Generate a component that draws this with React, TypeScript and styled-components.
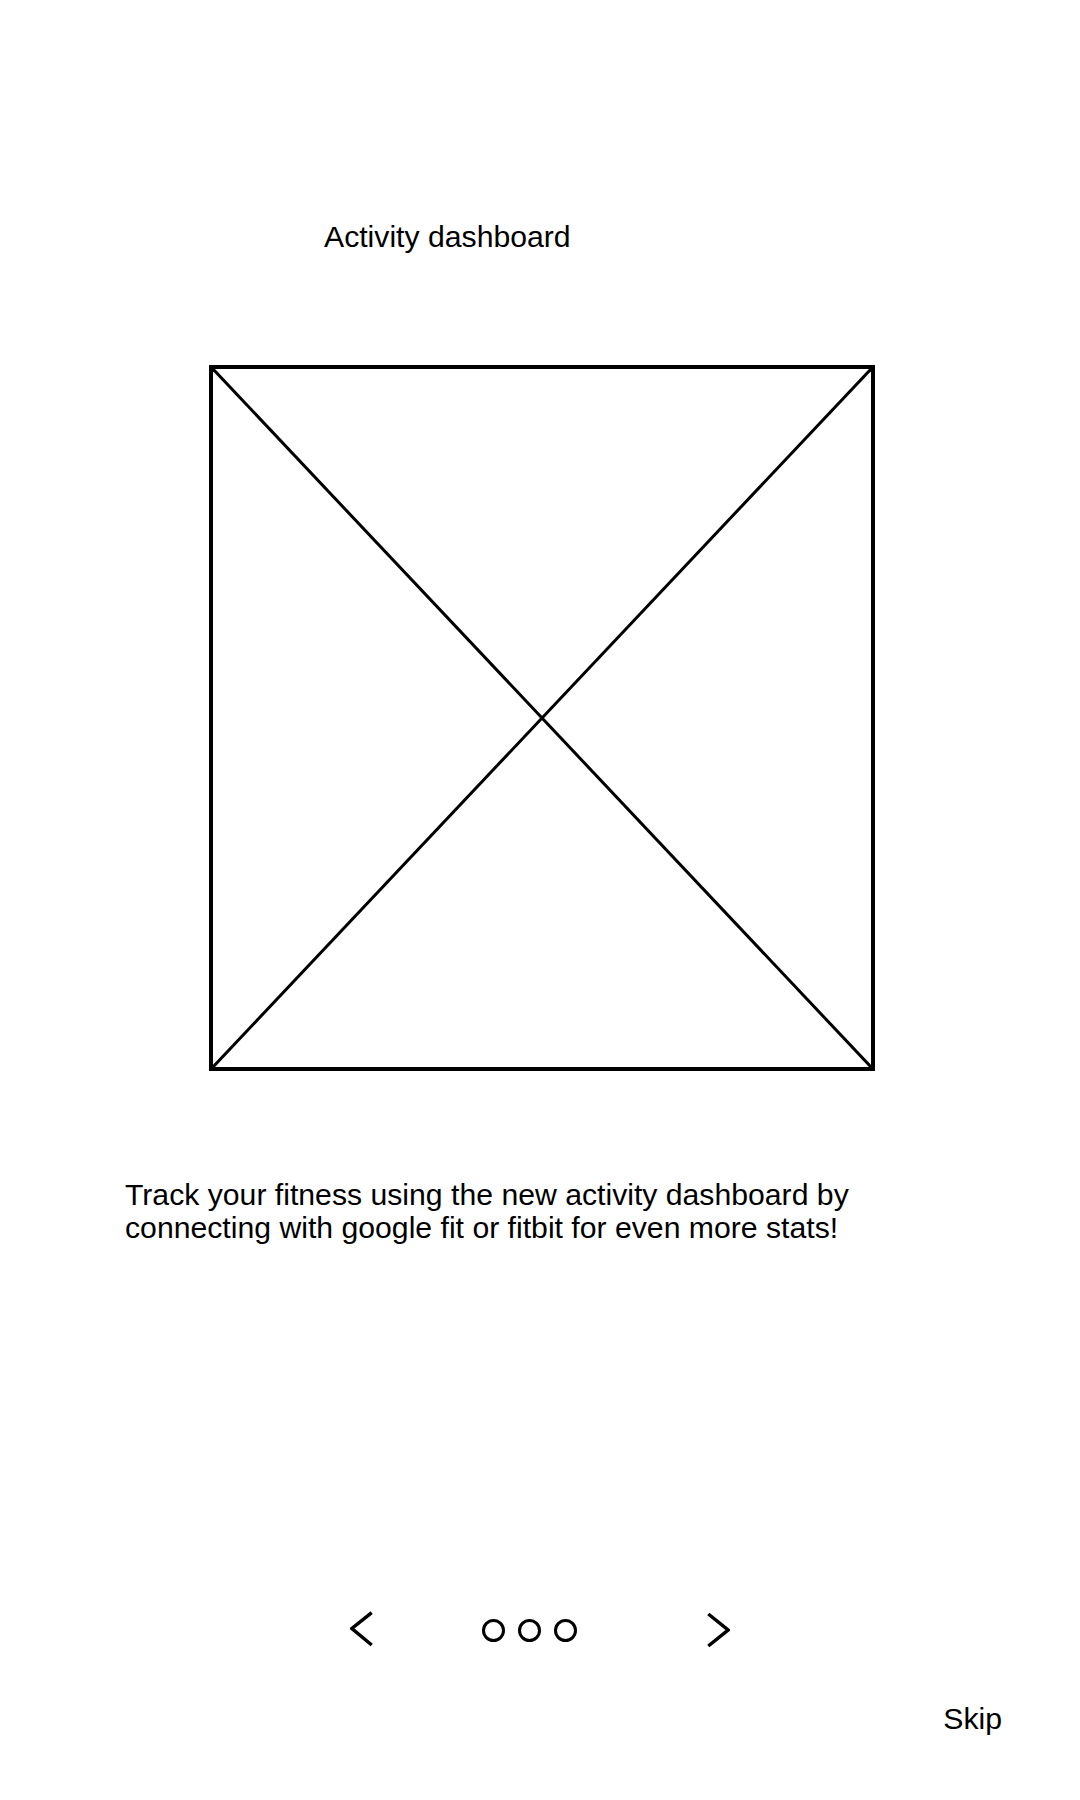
import { createGlobalStyle } from "styled-components";
import styled from "styled-components";

const GlobalStyle = createGlobalStyle`
html, body {
  margin: 0;
  padding: 0;
  background: #ffffff;
}
body {
  font-family: "Liberation Sans", Arial, sans-serif;
  color: #000000;
}
`

const Pagina = styled.div`
width: 1080px;
min-height: 1800px;
display: flex;
flex-direction: column;
background: #ffffff;
`

const Titulo = styled.h1`
margin: 220px 0 0 0;
padding-left: 324px;
font-weight: 400;
font-size: 30.2px;
line-height: 34px;
`

const Imagem = styled.div`
position: relative;
box-sizing: border-box;
margin: 111px 0 0 209px;
width: 666px;
height: 706px;
border: 4px solid #000000;
svg {
  display: block;
  width: 100%;
  height: 100%;
}
`

const Descricao = styled.p`
margin: 107px 0 0 0;
padding-left: 125px;
font-size: 30.2px;
line-height: 33px;
`

const Navegacao = styled.nav`
margin-top: 366px;
height: 38px;
display: flex;
align-items: flex-start;
padding-left: 350px;
`

const Seta = styled.button<{ $espaco: number }>`
margin: 0 0 0 ${(p) => p.$espaco}px;
padding: 0;
border: none;
background: none;
width: 24px;
height: 38px;
cursor: pointer;
svg {
  display: block;
}
`

const Pontos = styled.div`
display: flex;
gap: 13px;
margin: 9px 0 0 108px;
`

const Ponto = styled.span`
box-sizing: border-box;
width: 23px;
height: 23px;
border: 3px solid #000000;
border-radius: 50%;
`

const Rodape = styled.div`
margin-top: 54px;
display: flex;
justify-content: flex-end;
padding-right: 78px;
`

const Pular = styled.a`
font-size: 30.2px;
line-height: 34px;
color: #000000;
text-decoration: none;
cursor: pointer;
`

export default function App() {
    return (
        <>
            <GlobalStyle />
            <Pagina>
                <Titulo>Activity dashboard</Titulo>
                <Imagem>
                    <svg viewBox="0 0 658 698" preserveAspectRatio="none">
                        <line x1="0" y1="0" x2="658" y2="698" stroke="#000" strokeWidth="3" />
                        <line x1="658" y1="0" x2="0" y2="698" stroke="#000" strokeWidth="3" />
                    </svg>
                </Imagem>
                <Descricao>
                    Track your fitness using the new activity dashboard by<br />
                    connecting with google fit or fitbit for even more stats!
                </Descricao>
                <Navegacao>
                    <Seta $espaco={0} aria-label="Anterior">
                        <svg width="24" height="38" viewBox="0 0 24 38">
                            <polyline points="21.7,2.7 1.9,18.5 21.7,35" fill="none" stroke="#000" strokeWidth="3.5" />
                        </svg>
                    </Seta>
                    <Pontos>
                        <Ponto />
                        <Ponto />
                        <Ponto />
                    </Pontos>
                    <Seta $espaco={129} aria-label="Próximo">
                        <svg width="24" height="38" viewBox="0 0 24 38">
                            <polyline points="2.3,4 22.1,20 2.3,36" fill="none" stroke="#000" strokeWidth="3.5" />
                        </svg>
                    </Seta>
                </Navegacao>
                <Rodape>
                    <Pular>Skip</Pular>
                </Rodape>
            </Pagina>
        </>
    )
}
